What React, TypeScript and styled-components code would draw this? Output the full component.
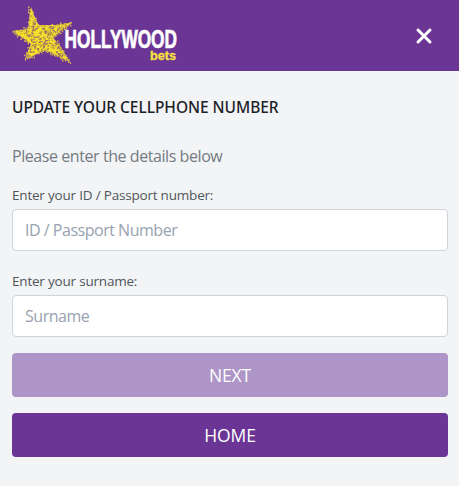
import React, { useState } from 'react';
import styled, { createGlobalStyle } from 'styled-components';

const GlobalStyle = createGlobalStyle`
  * {
    box-sizing: border-box;
  }
  body {
    margin: 0;
    background: #f2f4f6;
    font-family: 'Open Sans', 'Noto Sans', sans-serif;
  }
`;

const Page = styled.div`
  min-height: 100vh;
  background: #f2f4f6;
`;

const Header = styled.header`
  display: flex;
  align-items: center;
  justify-content: space-between;
  height: 71px;
  padding-right: 26px;
  background: #6a3594;
`;

const LogoDrawing = styled.svg`
  overflow: visible;
`;

const CloseButton = styled.button`
  display: flex;
  padding: 0;
  border: 0;
  background: none;
  cursor: pointer;
`;

const Form = styled.form`
  display: flex;
  flex-direction: column;
  padding: 24px 11px 0 12px;
`;

const Title = styled.h1`
  margin: 0 0 25px;
  color: #1c2126;
  font-family: 'Noto Sans', sans-serif;
  font-size: 15.5px;
  font-weight: 500;
  line-height: 24px;
  letter-spacing: -0.04px;
`;

const Intro = styled.p`
  margin: 0 0 17px;
  color: #747b82;
  font-size: 16px;
  line-height: 24px;
  letter-spacing: -0.43px;
`;

const Field = styled.label`
  display: flex;
  flex-direction: column;
  gap: 4px;
  margin-bottom: 20px;
  &:last-of-type {
    margin-bottom: 16px;
  }
`;

const FieldName = styled.span`
  color: #50565c;
  font-size: 13.5px;
  line-height: 20px;
  letter-spacing: -0.2px;
`;

const Input = styled.input`
  height: 42px;
  padding: 0 12px;
  border: 1px solid #ced4da;
  border-radius: 4px;
  outline: none;
  background: white;
  color: #495057;
  font-family: inherit;
  font-size: 16px;
  letter-spacing: -0.48px;
  &::placeholder {
    color: #98a2b0;
    opacity: 1;
  }
`;

const Actions = styled.div`
  display: flex;
  flex-direction: column;
  gap: 16px;
`;

const Button = styled.button`
  height: 44px;
  padding: 0 0 1px;
  border: 0;
  border-radius: 4px;
  background: #6a3594;
  color: white;
  font-family: inherit;
  font-size: 17.5px;
  letter-spacing: -0.1px;
  cursor: pointer;
  &:disabled {
    background: #ad95c8;
    cursor: default;
  }
`;

const STAR: [number, number][] = [
  [31, 7],
  [33.5, 14],
  [38.5, 25],
  [56, 25],
  [72, 22.5],
  [53, 37],
  [60, 46],
  [70, 62],
  [56, 55],
  [45, 50],
  [27, 59],
  [26, 56],
  [31, 44],
  [13, 31],
  [28, 29],
];

// Small seeded generator, so the glitter is the same on every render
const createRandom = (seed: number) => () => {
  seed = (seed * 16807) % 2147483647;
  return seed / 2147483647;
};

const random = createRandom(71);

const edgeFlecks = STAR.flatMap(([x, y], i) => {
  const [nx, ny] = STAR[(i + 1) % STAR.length];
  const count = Math.round(Math.hypot(nx - x, ny - y) / 1.6);
  return Array.from({ length: count }, (_, j) => {
    const t = j / count;
    return {
      x: x + (nx - x) * t + (random() - 0.5) * 2.6,
      y: y + (ny - y) * t + (random() - 0.5) * 2.6,
      angle: random() * 180,
    };
  });
});

const darkFlecks = Array.from({ length: 780 }, () => ({
  x: 12 + random() * 60,
  y: 7 + random() * 55,
  angle: random() * 180,
  color: random() > 0.5 ? '#8a5a7c' : '#ae8c42',
}));

const Logo = () => {
  const points = STAR.map(p => p.join(',')).join(' ');
  return (
    <LogoDrawing width="190" height="71" viewBox="0 0 190 71">
      <clipPath id="star">
        <polygon points={points} />
      </clipPath>
      <polygon points={points} fill="#f3df2c" />
      <g clipPath="url(#star)">
        {darkFlecks.map((f, i) => (
          <rect
            key={i}
            width="1.7"
            height="0.9"
            fill={f.color}
            transform={`translate(${f.x} ${f.y}) rotate(${f.angle})`}
          />
        ))}
      </g>
      {edgeFlecks.map((f, i) => (
        <rect
          key={i}
          width="1.8"
          height="1.1"
          fill="#e0c14a"
          transform={`translate(${f.x} ${f.y}) rotate(${f.angle})`}
        />
      ))}
      <text
        x="64.5"
        y="48.3"
        fill="white"
        stroke="white"
        strokeWidth="0.7"
        fontFamily="'Liberation Sans', sans-serif"
        fontSize="26"
        fontWeight="700"
        textLength="112.5"
        lengthAdjust="spacingAndGlyphs"
      >
        HOLLYWOOD
      </text>
      <text
        x="150"
        y="59.7"
        fill="#fbe33b"
        stroke="#fbe33b"
        strokeWidth="0.3"
        fontFamily="'Liberation Sans', sans-serif"
        fontSize="13.5"
        fontWeight="700"
        textLength="26"
        lengthAdjust="spacingAndGlyphs"
      >
        bets
      </text>
    </LogoDrawing>
  );
};

const App = () => {
  const [idNumber, setIdNumber] = useState('');
  const [surname, setSurname] = useState('');

  return (
    <Page>
      <GlobalStyle />
      <Header>
        <Logo />
        <CloseButton type="button" aria-label="Close">
          <svg width="18" height="18" viewBox="0 0 18 18">
            <path
              d="M3 3L15 15M15 3L3 15"
              stroke="white"
              strokeWidth="3"
              strokeLinecap="round"
            />
          </svg>
        </CloseButton>
      </Header>
      <Form>
        <Title>UPDATE YOUR CELLPHONE NUMBER</Title>
        <Intro>Please enter the details below</Intro>
        <Field>
          <FieldName>Enter your ID / Passport number:</FieldName>
          <Input
            placeholder="ID / Passport Number"
            value={idNumber}
            onChange={e => setIdNumber(e.target.value)}
          />
        </Field>
        <Field>
          <FieldName>Enter your surname:</FieldName>
          <Input
            placeholder="Surname"
            value={surname}
            onChange={e => setSurname(e.target.value)}
          />
        </Field>
        <Actions>
          <Button disabled={!idNumber || !surname}>NEXT</Button>
          <Button type="button">HOME</Button>
        </Actions>
      </Form>
    </Page>
  );
};

export default App;
